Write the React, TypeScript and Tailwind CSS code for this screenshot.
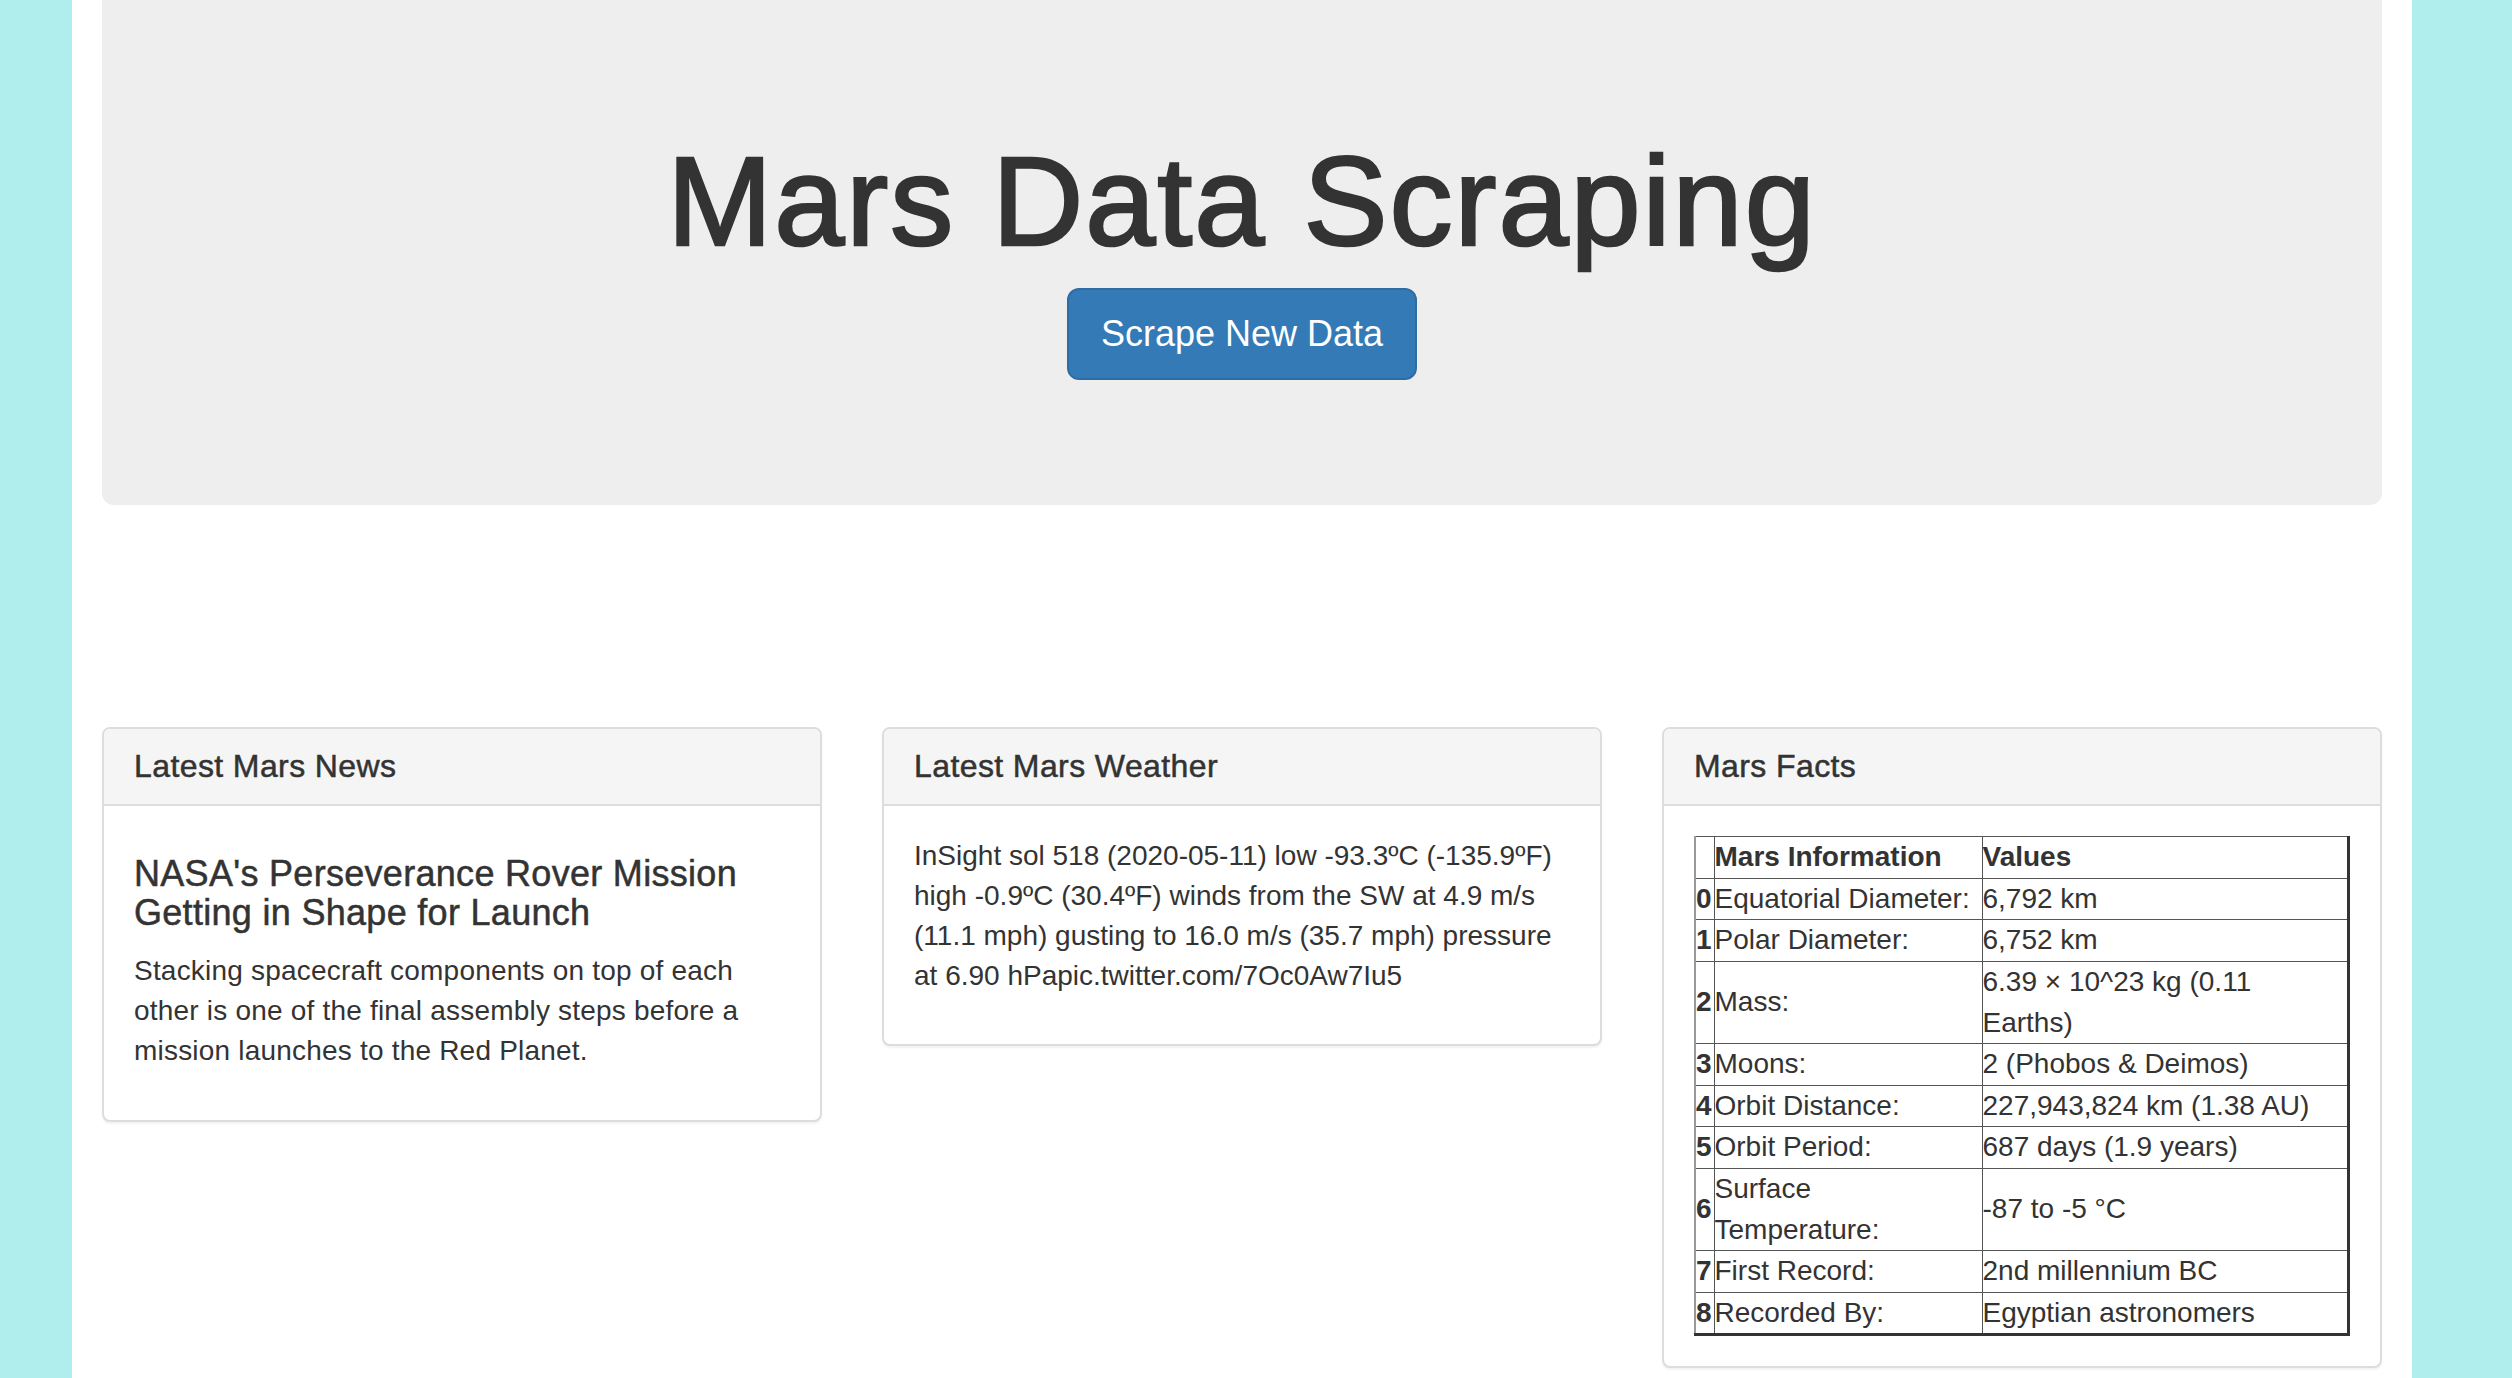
import React from "react";

const facts: [string, string][] = [
  ["Equatorial Diameter:", "6,792 km"],
  ["Polar Diameter:", "6,752 km"],
  ["Mass:", "6.39 × 10^23 kg (0.11 Earths)"],
  ["Moons:", "2 (Phobos & Deimos)"],
  ["Orbit Distance:", "227,943,824 km (1.38 AU)"],
  ["Orbit Period:", "687 days (1.9 years)"],
  ["Surface Temperature:", "-87 to -5 °C"],
  ["First Record:", "2nd millennium BC"],
  ["Recorded By:", "Egyptian astronomers"],
];

function Panel({ title, children }: { title: string; children: React.ReactNode }) {
  return (
    <div className="w-[720px] bg-white border-2 border-[#ddd] rounded-[8px] shadow-[0_2px_2px_rgba(0,0,0,0.05)]">
      <div className="px-[30px] py-[20px] bg-[#f5f5f5] border-b-2 border-[#ddd] rounded-t-[6px]">
        <h3 className="text-[32px] leading-[1.1] text-[#333] tracking-[0.4px] [-webkit-text-stroke:0.5px_#333]">{title}</h3>
      </div>
      <div className="p-[30px]">{children}</div>
    </div>
  );
}

export default function App() {
  return (
    <div
      className="min-h-[1378px] bg-[#b0eeee] text-[#333]"
      style={{ fontFamily: '"Liberation Sans", Arial, sans-serif' }}
    >
      <div className="ml-[72px] w-[2340px] min-h-[1378px] bg-white px-[30px]">
        <div className="h-[505px] bg-[#eee] rounded-b-[12px] flex flex-col items-center pt-[133px]">
          <h1 className="text-[126px] leading-[1.1] text-[#333] tracking-[2px] [-webkit-text-stroke:2.5px_#333]">Mars Data Scraping</h1>
          <button className="mt-[16px] px-[32px] py-[20px] text-[36px] leading-[48px] text-white bg-[#337ab7] border-2 border-[#2e6da4] rounded-[12px]">
            Scrape New Data
          </button>
        </div>

        <div className="mt-[222px] flex gap-[60px] items-start">
          <Panel title="Latest Mars News">
            <h4 className="mt-[19px] mb-[19px] text-[36px] leading-[1.07] tracking-[0.3px] [-webkit-text-stroke:0.5px_#333]">
              NASA's Perseverance Rover Mission Getting in Shape for Launch
            </h4>
            <p className="text-[28px] leading-[40px] mb-[19px] tracking-[0.2px]">
              Stacking spacecraft components on top of each other is one of the final assembly steps before a mission launches to the Red Planet.
            </p>
          </Panel>

          <Panel title="Latest Mars Weather">
            <p className="text-[28px] leading-[40px] mb-[18px]">
              InSight sol 518 (2020-05-11) low -93.3ºC (-135.9ºF) high -0.9ºC (30.4ºF) winds from the SW at 4.9 m/s (11.1 mph) gusting to 16.0 m/s (35.7 mph) pressure at 6.90 hPapic.twitter.com/7Oc0Aw7Iu5
            </p>
          </Panel>

          <Panel title="Mars Facts">
            <table className="w-full table-fixed border-collapse text-[28px] leading-[40.6px] border-t border-l-2 border-r-[3px] border-b-[3px] border-t-[#444] border-l-[#999] border-r-[#333] border-b-[#333]">
              <colgroup>
                <col className="w-[19px]" />
                <col className="w-[268px]" />
                <col />
              </colgroup>
              <thead>
                <tr>
                  <th className="border border-[#555] p-0 text-left"></th>
                  <th className="border border-[#555] p-0 text-left font-bold">Mars Information</th>
                  <th className="border border-[#555] p-0 text-left font-bold">Values</th>
                </tr>
              </thead>
              <tbody>
                {facts.map(([k, v], i) => (
                  <tr key={i}>
                    <th className="border border-[#555] p-0 text-left font-bold align-middle">{i}</th>
                    <td className="border border-[#555] p-0 align-middle">{k}</td>
                    <td className="border border-[#555] p-0 align-middle">{v}</td>
                  </tr>
                ))}
              </tbody>
            </table>
          </Panel>
        </div>
      </div>
    </div>
  );
}
